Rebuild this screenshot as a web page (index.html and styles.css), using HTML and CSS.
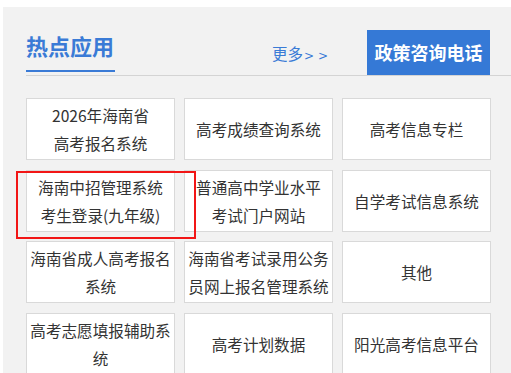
FILE: index.html
```html
<!DOCTYPE html>
<html lang="zh-CN">
<head>
<meta charset="utf-8">
<title>热点应用</title>
<link rel="stylesheet" href="styles.css">
</head>
<body>
<div class="panel">
  <div class="head">
    <h2 class="title">热点应用</h2>
    <a class="more" href="#">更多<span class="arrows">&gt; &gt;</span></a>
    <a class="hotline" href="#">政策咨询电话</a>
  </div>
  <div class="grid">
    <a class="cell" href="#">2026年海南省<br>高考报名系统</a>
    <a class="cell" href="#">高考成绩查询系统</a>
    <a class="cell" href="#">高考信息专栏</a>
    <a class="cell marked" href="#">海南中招管理系统<br>考生登录(九年级)<span class="mark"></span></a>
    <a class="cell" href="#">普通高中学业水平<br>考试门户网站</a>
    <a class="cell" href="#">自学考试信息系统</a>
    <a class="cell" href="#">海南省成人高考报名系统</a>
    <a class="cell" href="#">海南省考试录用公务员网上报名管理系统</a>
    <a class="cell" href="#">其他</a>
    <a class="cell" href="#">高考志愿填报辅助系统</a>
    <a class="cell" href="#">高考计划数据</a>
    <a class="cell" href="#">阳光高考信息平台</a>
  </div>
</div>
</body>
</html>
```

FILE: styles.css
```css
html, body {
  margin: 0;
  padding: 0;
  background: #ffffff;
  overflow: hidden;
}
body {
  font-family: "Noto Sans CJK SC", "Noto Sans", sans-serif;
}
.panel {
  margin: 7px 0 0 3px;
  padding: 0 0 40px 23px;
  background: #f2f2f2;
}
.head {
  display: flex;
  align-items: flex-end;
  height: 68px;
  border-bottom: 1px solid #d4d4d4;
}
.title {
  margin: 0 0 3px 0;
  width: 89px;
  font-size: 22px;
  font-weight: bold;
  line-height: 26px;
  padding-bottom: 12px;
  color: #3a7bd6;
  border-bottom: 2px solid #3a7bd6;
  white-space: nowrap;
}
.more {
  margin: 0 0 9px 157px;
  font-size: 15.5px;
  line-height: 20px;
  color: #3a7bd6;
  text-decoration: none;
  white-space: nowrap;
}
.arrows {
  margin-left: 1px;
  font-family: "DejaVu Sans", sans-serif;
  font-size: 12px;
}
.hotline {
  margin: 0 21px 0 auto;
  width: 123px;
  height: 45px;
  background: #3579d6;
  color: #ffffff;
  font-size: 18px;
  font-weight: bold;
  line-height: 45px;
  text-align: center;
  text-decoration: none;
  white-space: nowrap;
}
.grid {
  margin-top: 22px;
  display: grid;
  grid-template-columns: repeat(3, 149px);
  grid-auto-rows: 62px;
  column-gap: 9px;
  row-gap: 9.67px;
}
.cell {
  position: relative;
  box-sizing: border-box;
  display: flex;
  align-items: center;
  justify-content: center;
  padding: 0 3px;
  background: #ffffff;
  border: 1px solid #d9d9d9;
  color: #333333;
  font-size: 15.6px;
  line-height: 28px;
  text-align: center;
  text-decoration: none;
}
.marked {
  z-index: 1;
  background: transparent;
}
.marked::before {
  content: "";
  position: absolute;
  inset: -1px;
  background: #ffffff;
  border: 1px solid #d9d9d9;
  z-index: -1;
}
.mark {
  position: absolute;
  left: -11px;
  top: 0;
  width: 176px;
  height: 64px;
  border: 2px solid #f21616;
  pointer-events: none;
}
```
